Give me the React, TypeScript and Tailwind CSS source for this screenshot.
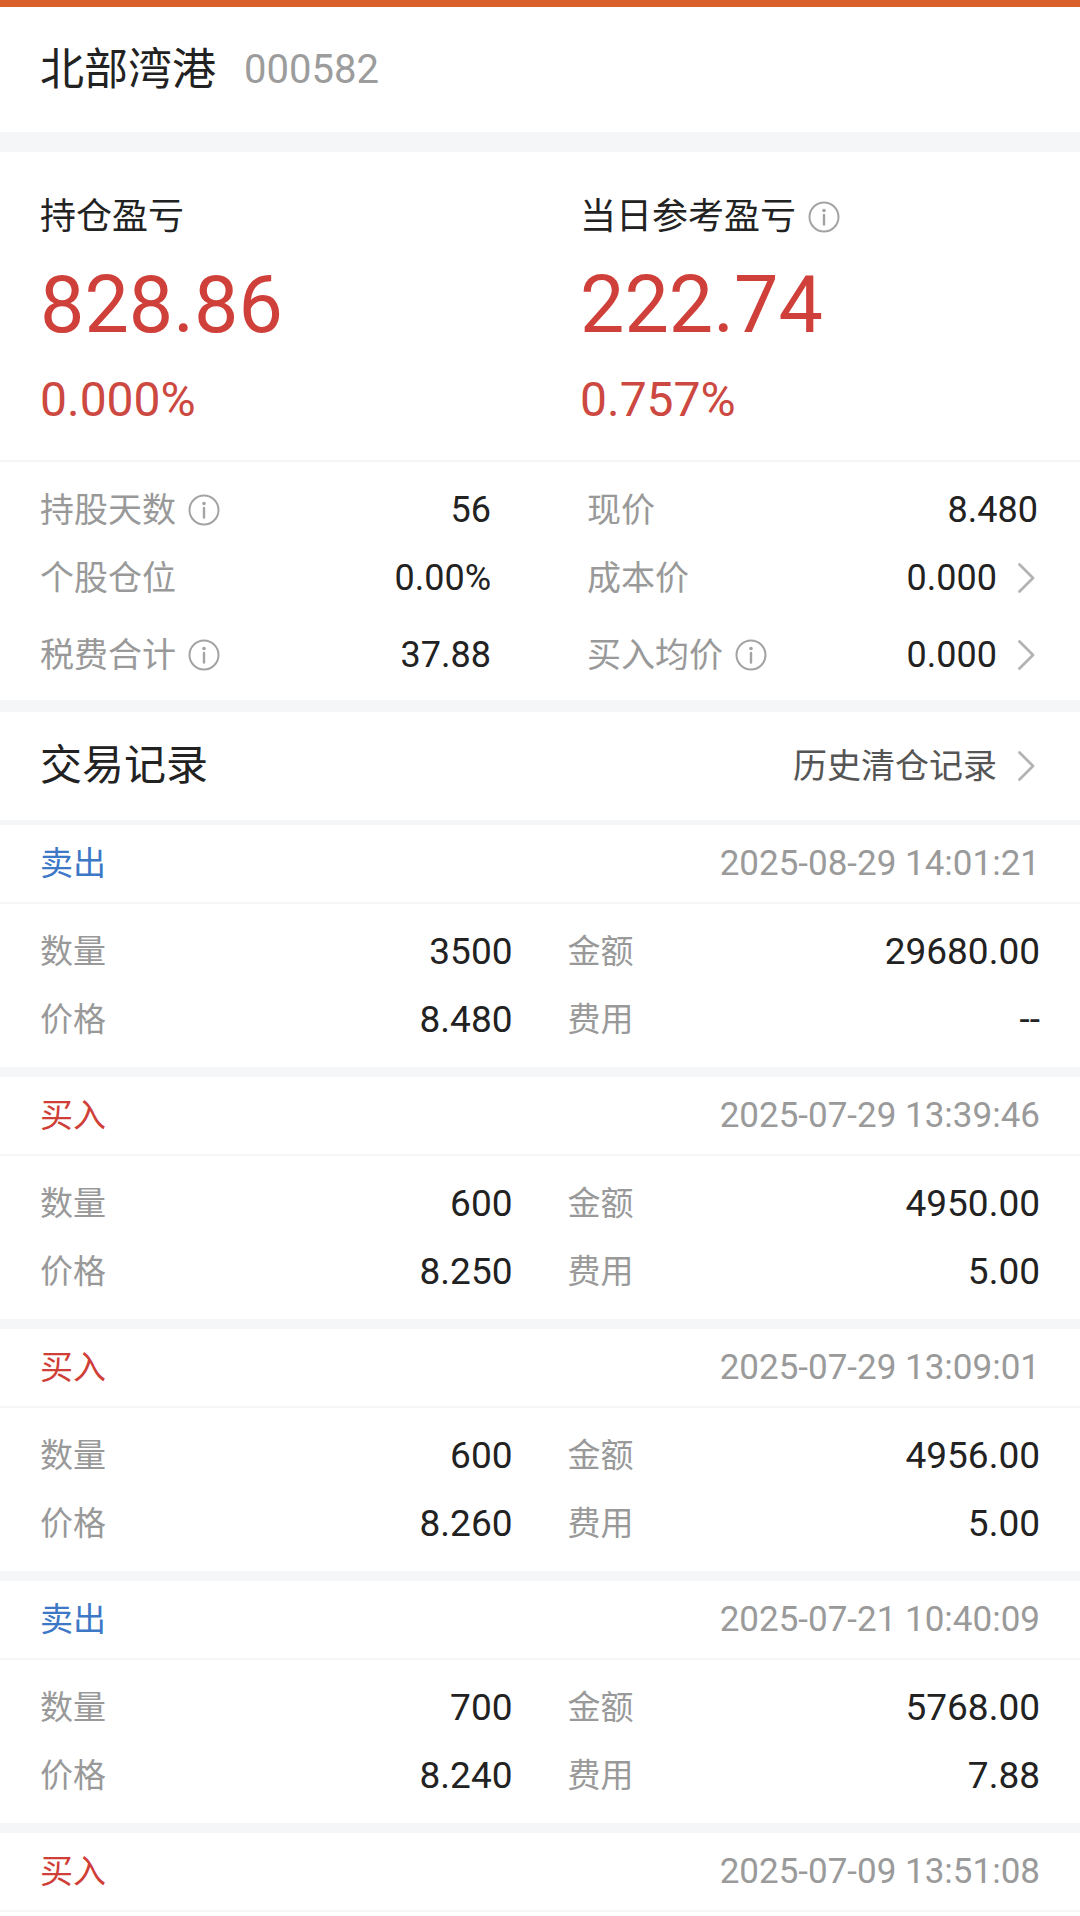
import type { ReactNode } from 'react'

type Trade = {
  side: 'buy' | 'sell'
  time: string
  qty: string
  amount: string
  price: string
  fee: string
}

const trades: Trade[] = [
  { side: 'sell', time: '2025-08-29 14:01:21', qty: '3500', amount: '29680.00', price: '8.480', fee: '--' },
  { side: 'buy', time: '2025-07-29 13:39:46', qty: '600', amount: '4950.00', price: '8.250', fee: '5.00' },
  { side: 'buy', time: '2025-07-29 13:09:01', qty: '600', amount: '4956.00', price: '8.260', fee: '5.00' },
  { side: 'sell', time: '2025-07-21 10:40:09', qty: '700', amount: '5768.00', price: '8.240', fee: '7.88' },
  { side: 'buy', time: '2025-07-09 13:51:08', qty: '', amount: '', price: '', fee: '' },
]

const InfoIcon = () => (
  <svg width="32" height="32" viewBox="0 0 32 32" fill="none" className="ml-[12px] shrink-0">
    <circle cx="16" cy="16" r="14.5" stroke="#a3a3a3" strokeWidth="2" />
    <circle cx="16" cy="9.5" r="1.8" fill="#a3a3a3" />
    <path d="M16 14v9.5" stroke="#a3a3a3" strokeWidth="2.4" strokeLinecap="round" />
  </svg>
)

const Chevron = () => (
  <svg width="18" height="30" viewBox="0 0 18 30" fill="none" className="ml-[20px] mr-[3px] shrink-0">
    <path d="M2.5 1.5L16 15 2.5 28.5" stroke="#b3b3b3" strokeWidth="2.8" strokeLinecap="round" strokeLinejoin="round" />
  </svg>
)

const StatCell = ({ label, value, info, arrow }: { label: string; value: string; info?: boolean; arrow?: boolean }) => (
  <div className="flex h-[68px] items-center justify-between">
    <div className="flex items-center">
      <span className="text-[34px] leading-[40px] text-[#999999]">{label}</span>
      {info && <InfoIcon />}
    </div>
    <div className="flex items-center">
      <span className="text-[36px] leading-[40px] text-[#222222]">{value}</span>
      {arrow && <Chevron />}
    </div>
  </div>
)

const TradeCell = ({ label, value }: { label: string; value: string }) => (
  <div className="flex h-[68px] items-center justify-between">
    <span className="text-[33px] leading-[40px] text-[#999999]">{label}</span>
    <span className="text-[37px] leading-[40px] text-[#222222]">{value}</span>
  </div>
)

const Band = ({ className }: { className: string }) => <div className={`bg-[#f5f6f8] ${className}`} />

const TwoCols = ({ children }: { children: ReactNode }) => (
  <div className="grid grid-cols-2 gap-x-[55px] px-[40px]">{children}</div>
)

const TradeCard = ({ trade, first }: { trade: Trade; first: boolean }) => (
  <div>
    <Band className={first ? 'h-[5px]' : 'h-[10px]'} />
    <div className="flex h-[77px] items-center justify-between px-[40px]">
      <span className={`text-[33px] leading-[40px] ${trade.side === 'sell' ? 'text-[#3d78c6]' : 'text-[#cf3f38]'}`}>
        {trade.side === 'sell' ? '卖出' : '买入'}
      </span>
      <span className="text-[35px] leading-[40px] text-[#9a9a9a]">{trade.time}</span>
    </div>
    <div className="h-[2px] bg-[#f5f6f8]" />
    {/* the last record is only partly on screen: its detail rows fall below the fold */}
    {trade.qty && (
      <div className="pt-[14px] pb-[13px]">
        <TwoCols>
          <TradeCell label="数量" value={trade.qty} />
          <TradeCell label="金额" value={trade.amount} />
          <TradeCell label="价格" value={trade.price} />
          <TradeCell label="费用" value={trade.fee} />
        </TwoCols>
      </div>
    )}
  </div>
)

export default function App() {
  return (
    <div className="h-[1916px] w-[1080px] overflow-hidden bg-white font-[Roboto,'Noto_Sans_CJK_SC',sans-serif]">
      <div className="h-[7px] bg-[#d9602a]" />

      {/* Stock title */}
      <div className="flex h-[125px] items-center px-[40px]">
        <span className="text-[44px] leading-[50px] text-[#222222]">北部湾港</span>
        <span className="ml-[28px] text-[40px] leading-[50px] text-[#9c9c9c]">000582</span>
      </div>
      <Band className="h-[20px]" />

      {/* Profit summary */}
      <div className="grid h-[308px] grid-cols-2">
        <div className="pt-[45px] pl-[40px]">
          <div className="flex h-[40px] items-center text-[36px] text-[#222222]">持仓盈亏</div>
          <div className="mt-[28px] h-[80px] text-[79px] leading-[80px] text-[#d0403a]">828.86</div>
          <div className="mt-[30px] h-[50px] text-[48px] leading-[50px] text-[#cc4840]">0.000%</div>
        </div>
        <div className="pt-[45px] pl-[40px]">
          <div className="flex h-[40px] items-center text-[36px] text-[#222222]">
            当日参考盈亏
            <InfoIcon />
          </div>
          <div className="mt-[28px] h-[80px] text-[79px] leading-[80px] text-[#d0403a]">222.74</div>
          <div className="mt-[30px] h-[50px] text-[48px] leading-[50px] text-[#cc4840]">0.757%</div>
        </div>
      </div>
      <div className="h-[2px] bg-[#f3f4f6]" />

      {/* Position stats */}
      <div className="h-[238px] pt-[14px] pr-[42px] pl-[40px]">
        <div className="grid grid-cols-2 gap-x-[96px]">
          <StatCell label="持股天数" value="56" info />
          <StatCell label="现价" value="8.480" />
          <StatCell label="个股仓位" value="0.00%" />
          <StatCell label="成本价" value="0.000" arrow />
        </div>
        <div className="mt-[9px] grid grid-cols-2 gap-x-[96px]">
          <StatCell label="税费合计" value="37.88" info />
          <StatCell label="买入均价" value="0.000" info arrow />
        </div>
      </div>
      <Band className="h-[12px]" />

      {/* Trade records */}
      <div className="flex h-[108px] items-center justify-between pr-[42px] pl-[40px]">
        <span className="text-[42px] leading-[50px] text-[#222222]">交易记录</span>
        <div className="flex items-center">
          <span className="text-[34px] leading-[40px] text-[#555555]">历史清仓记录</span>
          <Chevron />
        </div>
      </div>

      {trades.map((trade, index) => (
        <TradeCard key={`${trade.time}-${index.toString()}`} trade={trade} first={index === 0} />
      ))}
    </div>
  )
}
